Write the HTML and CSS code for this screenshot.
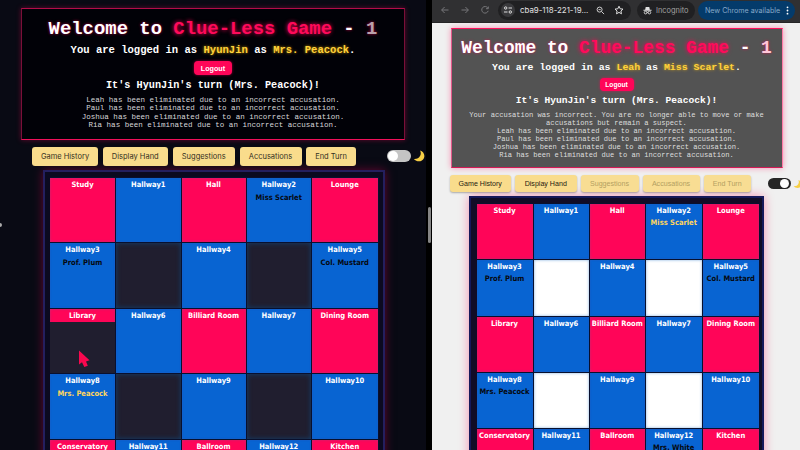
FILE: index.html
```html
<!DOCTYPE html>
<html lang="en">
<head>
<meta charset="utf-8">
<title>Clue-Less Game</title>
<link rel="stylesheet" href="styles.css">
</head>
<body>
<div class="screen">
  <section class="pane dark">
    <header class="banner">
      <h1>Welcome to <span class="brand">Clue-Less Game</span> - <span class="num">1</span></h1>
      <h2>You are logged in as <b>HyunJin</b> as <b>Mrs. Peacock</b>.</h2>
      <button class="logout">Logout</button>
      <h3>It's HyunJin's turn (Mrs. Peacock)!</h3>
      <div class="log">
        <p>Leah has been eliminated due to an incorrect accusation.</p>
        <p>Paul has been eliminated due to an incorrect accusation.</p>
        <p>Joshua has been eliminated due to an incorrect accusation.</p>
        <p>Ria has been eliminated due to an incorrect accusation.</p>
      </div>
    </header>
    <nav class="actions">
      <button class="w1">Game History</button>
      <button class="w2">Display Hand</button>
      <button class="w3">Suggestions</button>
      <button class="w4">Accusations</button>
      <button class="w5">End Turn</button>
      <span class="toggle"></span>
      <svg class="moon" viewBox="0 0 12 12"><path d="M7 .5C10.500 1.500 12.300 5 10.900 8.200C9.400 11.700 4.200 12.600 .8 9C4 9.200 6 8 7 6C8 4.200 8 2.300 7 .5Z" fill="#f7cf45"/></svg>
    </nav>
    <main class="board">
      <div class="room">Study</div><div class="hall">Hallway1</div><div class="room">Hall</div><div class="hall">Hallway2<i>Miss Scarlet</i></div><div class="room">Lounge</div>
      <div class="hall">Hallway3<i>Prof. Plum</i></div><div class="gap"></div><div class="hall">Hallway4</div><div class="gap"></div><div class="hall">Hallway5<i>Col. Mustard</i></div>
      <div class="room hover">Library<span class="shade"></span></div><div class="hall">Hallway6</div><div class="room">Billiard Room</div><div class="hall">Hallway7</div><div class="room">Dining Room</div>
      <div class="hall">Hallway8<i class="me">Mrs. Peacock</i></div><div class="gap"></div><div class="hall">Hallway9</div><div class="gap"></div><div class="hall">Hallway10</div>
      <div class="room">Conservatory</div><div class="hall">Hallway11</div><div class="room">Ballroom</div><div class="hall">Hallway12</div><div class="room">Kitchen</div>
    </main>
    <svg class="pointer" viewBox="0 0 12 18"><path d="M1 .5V14.500L4 12.200L6.300 17L9.800 15.700L8 11.500L11.500 10.300Z" fill="#f8084f"/></svg>
    <span class="edge"></span>
  </section>
  <div class="divider"><span class="grip"></span></div>
  <section class="pane light">
    <div class="chrome">
      <svg class="ic back" viewBox="0 0 10 10"><path d="M8.500 5H1.800M4.600 2L1.600 5L4.600 8"/></svg>
      <svg class="ic fwd" viewBox="0 0 10 10"><path d="M1.500 5H8.200M5.400 2L8.400 5L5.400 8"/></svg>
      <svg class="ic reload" viewBox="0 0 10 10"><path d="M7.800 3A3.300 3.300 0 1 0 8.200 5.800M8.300 1.500V3.700H6"/></svg>
      <div class="address">
        <svg class="tune" viewBox="0 0 14 14"><circle cx="7" cy="7" r="7" fill="#39393c" stroke="none"/><path d="M7.500 5H11M3 9H6.500"/><circle cx="4.700" cy="5" r="1.200"/><circle cx="9.300" cy="9" r="1.200"/></svg>
        <span class="url">cba9-118-221-19...</span>
        <svg class="mag" viewBox="0 0 10 10"><circle cx="4" cy="4" r="2.800"/><path d="M6.200 6.200L9 9M2.800 4H5.200"/></svg>
        <svg class="star" viewBox="0 0 10 10"><path d="M5 1.200L6.200 3.800L9 4.100L6.900 6L7.500 8.800L5 7.400L2.500 8.800L3.100 6L1 4.100L3.800 3.800Z"/></svg>
      </div>
      <div class="incog">
        <svg viewBox="0 0 10 10"><path d="M3 1H7L7.600 4.200H9.500V5.200H.5V4.200H2.400Z" fill="#e0e0e0" stroke="none"/><circle cx="2.900" cy="7.300" r="1.500"/><circle cx="7.100" cy="7.300" r="1.500"/><path d="M4.200 7H5.800"/></svg>
        <span>Incognito</span>
      </div>
      <div class="update"><span>New Chrome available</span><svg viewBox="0 0 3 9"><circle cx="1.500" cy="1.300" r=".9"/><circle cx="1.500" cy="4.500" r=".9"/><circle cx="1.500" cy="7.700" r=".9"/></svg></div>
    </div>
    <header class="banner">
      <h1>Welcome to <span class="brand">Clue-Less Game</span> - <span class="num">1</span></h1>
      <h2>You are logged in as <b>Leah</b> as <b>Miss Scarlet</b>.</h2>
      <button class="logout">Logout</button>
      <h3>It's HyunJin's turn (Mrs. Peacock)!</h3>
      <div class="log">
        <p>Your accusation was incorrect. You are no longer able to move or make</p>
        <p>accusations but remain a suspect.</p>
        <p>Leah has been eliminated due to an incorrect accusation.</p>
        <p>Paul has been eliminated due to an incorrect accusation.</p>
        <p>Joshua has been eliminated due to an incorrect accusation.</p>
        <p>Ria has been eliminated due to an incorrect accusation.</p>
      </div>
    </header>
    <nav class="actions">
      <button class="w1">Game History</button>
      <button class="w2">Display Hand</button>
      <button class="w3" disabled>Suggestions</button>
      <button class="w4" disabled>Accusations</button>
      <button class="w5" disabled>End Turn</button>
      <span class="toggle on"></span>
      <svg class="moon" viewBox="0 0 12 12"><path d="M7 .5C10.500 1.500 12.300 5 10.900 8.200C9.400 11.700 4.200 12.600 .8 9C4 9.200 6 8 7 6C8 4.200 8 2.300 7 .5Z" fill="#f7cf45"/></svg>
    </nav>
    <main class="board">
      <div class="room">Study</div><div class="hall">Hallway1</div><div class="room">Hall</div><div class="hall">Hallway2<i class="me">Miss Scarlet</i></div><div class="room">Lounge</div>
      <div class="hall">Hallway3<i>Prof. Plum</i></div><div class="gap"></div><div class="hall">Hallway4</div><div class="gap"></div><div class="hall">Hallway5<i>Col. Mustard</i></div>
      <div class="room">Library</div><div class="hall">Hallway6</div><div class="room">Billiard Room</div><div class="hall">Hallway7</div><div class="room">Dining Room</div>
      <div class="hall">Hallway8<i>Mrs. Peacock</i></div><div class="gap"></div><div class="hall">Hallway9</div><div class="gap"></div><div class="hall">Hallway10</div>
      <div class="room">Conservatory</div><div class="hall">Hallway11</div><div class="room">Ballroom</div><div class="hall">Hallway12<i>Mrs. White</i></div><div class="room">Kitchen</div>
    </main>
  </section>
</div>
</body>
</html>
```

FILE: styles.css
```css
* { box-sizing: border-box; margin: 0; padding: 0; }
body { width: 800px; height: 450px; overflow: hidden; background: #000; }
.screen { display: flex; width: 800px; height: 450px; overflow: hidden; }
.pane { position: relative; height: 450px; overflow: hidden; flex: none; }
.dark { width: 426px; background: #090a14; padding-top: 8px; }
.light { width: 368px; background: #f0f0f0; }
.divider { width: 6px; flex: none; background: #000; padding: 207px 0 0 2px; }
.grip { display: block; width: 3px; height: 36px; border-radius: 2px; background: #858585; }
.edge { position: absolute; left: -2px; top: 223px; width: 4px; height: 4px; border-radius: 50%; background: #aaa; }

/* banner */
.banner {
  display: flex; flex-direction: column; align-items: center;
  font-family: "Liberation Mono", monospace; color: #fff; white-space: nowrap;
  border: 1px solid #7a0f38; border-top-color: #b30d4a; border-bottom: 1px solid #f0105a;
}
.banner h1 { height: 24px; line-height: 24px; text-shadow: 0 0 3px rgba(255, 0, 85, .7); }
.brand { color: #ff0a5a; text-shadow: 0 0 4px #ff0055; }
.num { color: #b8a0aa; }
.banner h2, .banner h3 { height: 12px; line-height: 12px; }
.banner b { color: #ffd23c; text-shadow: 0 0 3px rgba(255, 190, 0, .8); }
.logout {
  flex: none; border: 0; border-radius: 4px; background: #ff0558; color: #fff;
  font-family: "Liberation Sans", sans-serif; font-weight: bold;
  box-shadow: 0 0 3px rgba(255, 0, 85, .6);
}
.dark .banner {
  margin-left: 21px; width: 384px; height: 132px; padding-top: 8px;
  background: #010107; box-shadow: 0 0 5px rgba(255, 0, 85, .35);
}
.dark h1 { font-size: 18.9px; }
.dark h2 { font-size: 10.55px; margin-top: 3px; }
.dark h3 { font-size: 10.2px; margin-top: 5px; }
.dark .logout { margin-top: 5px; width: 38px; height: 14px; font-size: 7.2px; }
.dark .log { margin-top: 3.800px; font-size: 7.560px; line-height: 8.400px; color: #d6d6d8; text-align: center; }
.light .banner {
  margin: 5px 0 0 19px; width: 332px; height: 140px; padding-top: 7px; background: #535353;
  border-color: #ff0f5c #ff7aa6 #d21a55 #e2588a; box-shadow: 0 0 6px rgba(255, 0, 85, .4);
}
.light .banner { padding-right: 1px; }
.light h1 { font-size: 17.850px; }
.light .num { color: #ffc6d8; }
.light h2 { font-size: 9.900px; margin-top: 2px; }
.light h3 { font-size: 9.600px; margin-top: 4px; }
.light .logout { margin-top: 4px; width: 34px; height: 13px; font-size: 6.600px; }
.light .log { margin-top: 3.600px; font-size: 7.120px; line-height: 8.050px; color: #dedede; text-align: center; }

/* action buttons */
.actions { display: flex; align-items: center; height: 19px; }
.actions button {
  flex: none; height: 19px; border: 0; border-radius: 3px; background: #f9dc8c; color: #333022; white-space: nowrap;
}
.dark .actions { margin: 6.500px 0 0 32px; gap: 4.500px; }
.dark .actions button { font: 7.500px Inter, sans-serif; }
.dark .w1 { width: 66px; } .dark .w2 { width: 65.500px; } .dark .w3 { width: 62.500px; }
.dark .w4 { width: 62px; } .dark .w5 { width: 50px; }
.light .actions { margin: 6.500px 0 0 17.500px; height: 18px; gap: 4px; }
.light .actions button { height: 17.500px; font: 7.100px "Liberation Sans", sans-serif; color: #26220f; box-shadow: 0 1px 2px rgba(0, 0, 0, .3); }
.light .w1 { width: 61.500px; } .light .w2 { width: 61.500px; } .light .w3 { width: 58px; }
.light .w4 { width: 57px; } .light .w5 { width: 47.500px; }
.light .actions button:disabled { color: #b49f62; background: #f8dd93; }
.toggle { flex: none; width: 24px; height: 12px; border-radius: 6px; background: #c4c4c4; padding: 1px; margin-left: 26.500px; }
.toggle::before { content: ""; display: block; width: 10px; height: 10px; border-radius: 50%; background: #fff; }
.toggle.on { width: 22.500px; height: 11px; margin-left: 13px; background: #262626; padding-left: 12px; }
.toggle.on::before { width: 9px; height: 9px; }
.dark .moon { flex: none; width: 12px; height: 12px; margin-left: -3px; }
.light .moon { flex: none; width: 9px; height: 10px; margin-left: -2px; }

/* board */
.board { display: grid; font-family: "DejaVu Sans Condensed", "DejaVu Sans", sans-serif; font-stretch: condensed; font-weight: bold; color: #fff; text-align: center; white-space: nowrap; }
.board > div { position: relative; overflow: hidden; border: solid #08102e; border-width: 1px 1px 0 0; }
.board i { display: block; font-style: normal; color: #06090f; }
.board .me { color: #ffd560; }
.room { background: #ff0558; box-shadow: inset 0 0 3px rgba(150, 70, 140, .6); }
.hall { background: #0864d2; box-shadow: inset 0 0 2px rgba(60, 80, 170, .6); }
.dark .board {
  width: 342px; margin: 4.500px 0 0 42.500px; padding: 5px 5px 0 5.500px; border: 2px solid #241f5e; border-bottom: 0;
  background: #0b0a20; grid-template-columns: 66px 65.500px 65px 65.500px 66.500px; grid-template-rows: repeat(5, 65.400px);
  font-size: 7.500px; line-height: 13px; box-shadow: 0 0 9px rgba(190, 0, 75, .5);
}
.dark .board i { line-height: 13px; }
.dark .gap { background: #201e2f; box-shadow: inset 0 0 5px #12406f; }
.shade { display: block; height: 52px; background: #201e2f; }
.light .board {
  width: 295px; margin: 3.500px 0 0 37px; padding: 5px 3px 0 5.500px; border: 2px solid #15195a; border-bottom: 0;
  background: #110c26; grid-template-columns: 57px 56px 56.500px 56.500px 57.500px; grid-template-rows: repeat(5, 56.300px);
  font-size: 7.500px; line-height: 14px; box-shadow: 0 0 10px rgba(255, 0, 85, .4);
}
.light .board i { line-height: 10px; }
.light .gap { background: #fff; box-shadow: inset 0 0 3px #7eaee0; }
.pointer { position: absolute; left: 78px; top: 350px; width: 12px; height: 18px; }

/* browser toolbar */
.chrome { display: flex; align-items: center; height: 23px; background: #303032; font: 7.100px Inter, sans-serif; padding-bottom: 2px; border-bottom: 1px solid #252526; white-space: nowrap; }
.chrome svg { flex: none; fill: none; stroke: #dedede; stroke-width: 1; }
.chrome .ic { width: 10px; height: 10px; stroke: #77777a; }
.back { margin-left: 8px; }
.fwd, .reload { margin-left: 10px; }
.address { display: flex; align-items: center; width: 133px; height: 19px; border-radius: 10px; background: #202022; margin-left: 8px; color: #e2e2e2; flex: none; }
.tune { width: 14px; height: 14px; margin-left: 3px; }
.url { margin-left: 5px; width: 73px; font-size: 7.900px; }
.mag { width: 9px; height: 9px; margin-left: 3px; }
.star { width: 10px; height: 10px; margin-left: 9px; }
.incog { display: flex; align-items: center; width: 58px; height: 19px; border-radius: 10px; background: #202022; margin-left: 6px; color: #a0a0a0; flex: none; }
.incog svg { width: 9px; height: 9px; margin: 0 4px 0 6px; }
.incog span { font-size: 7.400px; }
.update { display: flex; align-items: center; width: 97px; height: 19px; border-radius: 10px; background: #043b6b; margin-left: 3px; color: #86a9c9; flex: none; padding-left: 7px; }
.update span { width: 79px; }
.update svg { width: 3px; height: 9px; fill: #fff; stroke: none; margin-left: 2px; }
```
